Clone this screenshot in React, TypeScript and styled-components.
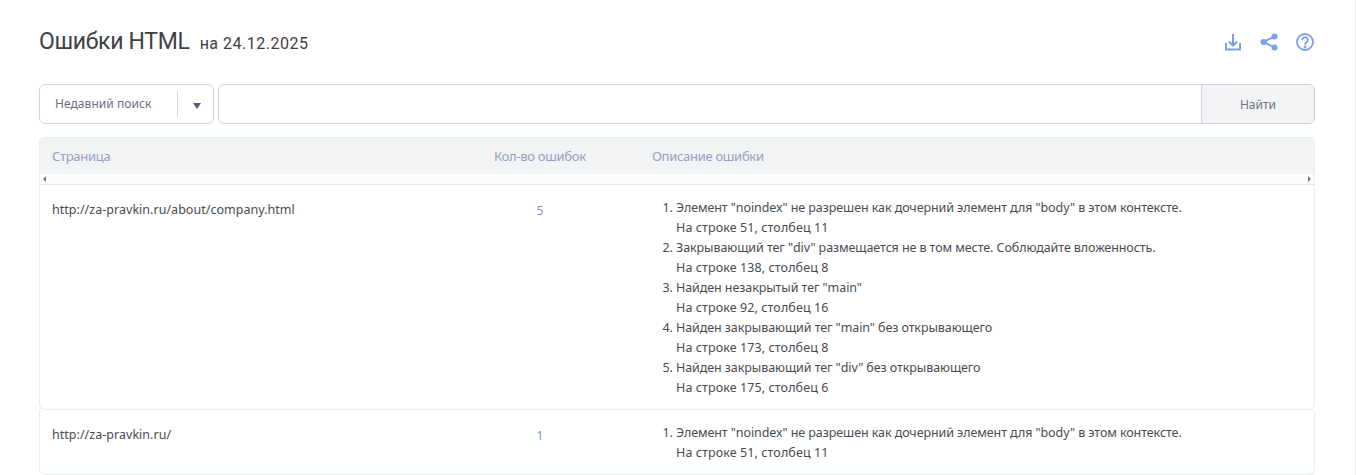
import { createGlobalStyle } from 'styled-components';
import styled from 'styled-components';

const GlobalStyle = createGlobalStyle`
  html, body {
    margin: 0;
    padding: 0;
    background: #fff;
    font-family: "Noto Sans", "Open Sans", sans-serif;
    color: #4a4b50;
  }
`;

const Page = styled.div`
  width: 1356px;
  height: 475px;
  overflow: hidden;
  box-sizing: border-box;
  padding: 0 40px 0 39px;
  border-right: 1px solid #f1f2f4;
`;

const Header = styled.header`
  height: 84px;
  display: flex;
  align-items: center;
  justify-content: space-between;
`;

const TitleWrapper = styled.div`
  display: flex;
  align-items: baseline;
  column-gap: 10px;
  margin-top: -1px;
`;

const Title = styled.h1`
  margin: 0;
  font-family: Roboto, sans-serif;
  font-weight: 400;
  font-size: 23px;
  line-height: 28px;
  letter-spacing: -0.3px;
  color: #3f4043;
`;

const TitleDate = styled.span`
  font-family: Roboto, sans-serif;
  font-size: 16px;
  letter-spacing: 0.5px;
  color: #3f4043;
`;

const Actions = styled.div`
  display: flex;
  align-items: center;
  column-gap: 18px;
  padding-right: 1px;
  color: #7b9fe8;
`;

const SearchRow = styled.div`
  display: flex;
  column-gap: 4px;
  height: 40px;
  margin-bottom: 13px;
`;

const RecentSelect = styled.div`
  width: 175px;
  box-sizing: border-box;
  border: 1px solid #d2d2e0;
  border-radius: 6px;
  display: flex;
  align-items: center;
  padding-left: 15px;
`;

const RecentLabel = styled.span`
  width: 122px;
  font-size: 12px;
  line-height: 14px;
  margin-top: -1px;
  letter-spacing: 0.05px;
  color: #6b6f85;
`;

const RecentArrow = styled.span`
  height: 26px;
  flex: 1;
  border-left: 1px solid #d2d2e0;
  display: flex;
  align-items: center;
  padding-left: 15px;
  &::after {
    content: '';
    margin-top: 3px;
    border-top: 6px solid #555b7a;
    border-left: 4px solid transparent;
    border-right: 4px solid transparent;
  }
`;

const SearchBox = styled.div`
  flex: 1;
  box-sizing: border-box;
  border: 1px solid #d2d2e0;
  border-radius: 6px;
  display: flex;
  overflow: hidden;
`;

const SearchInput = styled.div`
  flex: 1;
`;

const SearchButton = styled.div`
  width: 112px;
  border-left: 1px solid #d2d2e0;
  background: #f2f3f5;
  display: flex;
  align-items: center;
  justify-content: center;
  font-size: 12px;
  color: #70727c;
`;

const TableHead = styled.div`
  box-sizing: border-box;
  height: 48px;
  border: 1px solid #e9edf5;
  border-radius: 6px 6px 0 0;
  border-bottom-color: #e3e8f3;
  overflow: hidden;
`;

const HeadRow = styled.div`
  height: 36px;
  background: #f2f3f5;
  display: flex;
  align-items: center;
  font-size: 13px;
  letter-spacing: -0.3px;
  color: #96a0bd;
`;

const Scrollbar = styled.div`
  height: 10px;
  background: #fafbfb;
  display: flex;
  align-items: center;
  justify-content: space-between;
  padding: 0 3px;
`;

const ScrollArrow = styled.span<{ $right?: boolean }>`
  border-top: 3px solid transparent;
  border-bottom: 3px solid transparent;
  border-${p => (p.$right ? 'left' : 'right')}: 3px solid #777;
`;

const PageCell = styled.div`
  width: 442px;
  padding-left: 12px;
  box-sizing: border-box;
`;

const CountHead = styled.div`
  width: 158px;
  padding-left: 12px;
  box-sizing: border-box;
`;

const DescHead = styled.div`
  padding-left: 12px;
`;

const Row = styled.div`
  box-sizing: border-box;
  display: flex;
  align-items: flex-start;
  border: 1px solid #e9edf5;
  border-top: 0;
  border-radius: 0 0 6px 6px;
  padding: 13px 0 11px;
  font-size: 12.5px;
  line-height: 20px;
`;

const PageLink = styled(PageCell)`
  padding-top: 2px;
  letter-spacing: 0.03px;
`;

const Count = styled.div`
  width: 158px;
  padding: 3px 42px 0 0;
  box-sizing: border-box;
  text-align: center;
  font-size: 12px;
  color: #6f93dc;
`;

const ErrorList = styled.ol`
  margin: 0;
  padding: 0 0 0 36px;
  letter-spacing: -0.08px;
`;

const ErrorItem = styled.li`
  padding: 0;
`;

const ErrorPlace = styled.div`
  letter-spacing: 0.1px;
`;

const Download = () => (
  <svg width="18" height="18" viewBox="0 0 18 18" fill="none" stroke="currentColor" strokeWidth="2">
    <path d="M2 10v6.500h14V10" />
    <path d="M9 1v11" />
    <path d="M4.800 8.500L9 12.500l4.200-4" />
  </svg>
);

const Share = () => (
  <svg width="18" height="18" viewBox="0 0 18 18" fill="currentColor">
    <circle cx="14.500" cy="3.500" r="3" />
    <circle cx="14.500" cy="14.500" r="3" />
    <circle cx="3.500" cy="9" r="3" />
    <path d="M3.500 9l11-5.500M3.500 9l11 5.500" stroke="currentColor" strokeWidth="2" />
  </svg>
);

const Help = () => (
  <svg width="18" height="18" viewBox="0 0 18 18" fill="none" stroke="currentColor" strokeWidth="1.800">
    <circle cx="9" cy="9" r="8" />
    <path d="M6.300 7a2.800 2.800 0 1 1 4.400 2.300c-1 .7-1.700 1.200-1.700 2.500" />
    <circle cx="9" cy="14" r=".5" fill="currentColor" />
  </svg>
);

const ROWS = [
  {
    url: 'http://za-pravkin.ru/about/company.html',
    count: 5,
    errors: [
      ['Элемент "noindex" не разрешен как дочерний элемент для "body" в этом контексте.', 'На строке 51, столбец 11'],
      ['Закрывающий тег "div" размещается не в том месте. Соблюдайте вложенность.', 'На строке 138, столбец 8'],
      ['Найден незакрытый тег "main"', 'На строке 92, столбец 16'],
      ['Найден закрывающий тег "main" без открывающего', 'На строке 173, столбец 8'],
      ['Найден закрывающий тег "div" без открывающего', 'На строке 175, столбец 6'],
    ],
  },
  {
    url: 'http://za-pravkin.ru/',
    count: 1,
    errors: [
      ['Элемент "noindex" не разрешен как дочерний элемент для "body" в этом контексте.', 'На строке 51, столбец 11'],
    ],
  },
];

const App = () => {
  return (
    <Page>
      <GlobalStyle />
      <Header>
        <TitleWrapper>
          <Title>Ошибки HTML</Title>
          <TitleDate>на 24.12.2025</TitleDate>
        </TitleWrapper>
        <Actions>
          <Download />
          <Share />
          <Help />
        </Actions>
      </Header>
      <SearchRow>
        <RecentSelect>
          <RecentLabel>Недавний поиск</RecentLabel>
          <RecentArrow />
        </RecentSelect>
        <SearchBox>
          <SearchInput />
          <SearchButton>Найти</SearchButton>
        </SearchBox>
      </SearchRow>
      <TableHead>
        <HeadRow>
          <PageCell>Страница</PageCell>
          <CountHead>Кол-во ошибок</CountHead>
          <DescHead>Описание ошибки</DescHead>
        </HeadRow>
        <Scrollbar>
          <ScrollArrow />
          <ScrollArrow $right />
        </Scrollbar>
      </TableHead>
      {ROWS.map(row => (
        <Row key={row.url}>
          <PageLink>{row.url}</PageLink>
          <Count>{row.count}</Count>
          <ErrorList>
            {row.errors.map(([text, place]) => (
              <ErrorItem key={place + text}>
                {text}
                <ErrorPlace>{place}</ErrorPlace>
              </ErrorItem>
            ))}
          </ErrorList>
        </Row>
      ))}
    </Page>
  );
};

export default App;
